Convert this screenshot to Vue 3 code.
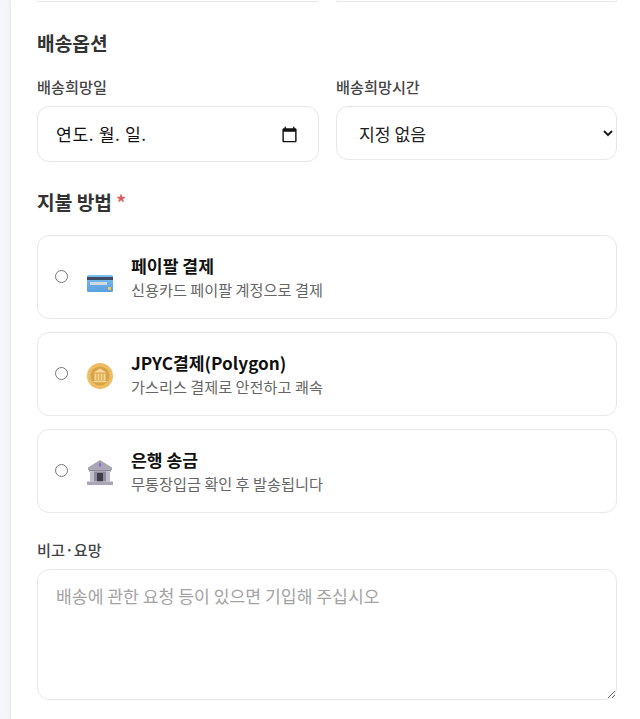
<script setup>
const methods = [
  { id: 'card', title: '페이팔 결제', desc: '신용카드 페이팔 계정으로 결제' },
  { id: 'coin', title: 'JPYC결제(Polygon)', desc: '가스리스 결제로 안전하고 쾌속' },
  { id: 'bank', title: '은행 송금', desc: '무통장입금 확인 후 발송됩니다' },
]
</script>

<template>
  <div class="page">
    <main class="card">
      <div class="stub-row">
        <div class="stub"></div>
        <div class="stub"></div>
      </div>

      <h2 class="heading first">배송옵션</h2>
      <div class="grid">
        <div>
          <label class="label">배송희망일</label>
          <div class="field date">
            <span class="date-text">연도. 월. 일.</span>
            <svg class="cal" viewBox="0 0 24 24" width="17" height="17">
              <path d="M20 3h-1V1h-2v2H7V1H5v2H4c-1.1 0-2 .9-2 2v16c0 1.1.9 2 2 2h16c1.1 0 2-.9 2-2V5c0-1.1-.9-2-2-2zm0 18H4V8h16v13z" fill="#111" />
            </svg>
          </div>
        </div>
        <div>
          <label class="label">배송희망시간</label>
          <select class="field select">
            <option>지정 없음</option>
          </select>
        </div>
      </div>

      <h2 class="heading second">지불 방법 <span class="req">*</span></h2>
      <div class="methods">
        <label v-for="m in methods" :key="m.id" class="method">
          <input class="radio" type="radio" name="pay" />
          <span class="icon">
            <svg v-if="m.id === 'card'" viewBox="0 0 26 26" width="26" height="26">
              <defs>
                <linearGradient id="cardBlue" x1="0" y1="0" x2="0" y2="1">
                  <stop offset="0" stop-color="#7cc0f0" />
                  <stop offset="1" stop-color="#5a9fe0" />
                </linearGradient>
              </defs>
              <rect x="0" y="9" width="26" height="17" rx="1.5" fill="url(#cardBlue)" />
              <rect x="0" y="11" width="26" height="3" fill="#3d4a63" />
              <rect x="3" y="16" width="17" height="3" fill="#d0d8e2" />
              <rect x="21" y="21" width="3" height="3" fill="#f0c94a" />
            </svg>
            <svg v-else-if="m.id === 'coin'" viewBox="0 0 26 26" width="26" height="26">
              <circle cx="13" cy="13" r="13" fill="#ecbd62" />
              <circle cx="13" cy="13" r="9.5" fill="#d9a146" />
              <path d="M13 5.5 L19.5 9.5 H6.5 Z" fill="#f5d896" />
              <path d="M7.5 10.5h2v6.5h-2zM10.6 10.5h1.8v6.5h-1.8zM13.6 10.5h1.8v6.5h-1.8zM16.5 10.5h2v6.5h-2z" fill="#f5d896" />
              <rect x="6.5" y="17.5" width="13" height="1.8" fill="#f5d896" />
            </svg>
            <svg v-else viewBox="0 0 26 26" width="26" height="26">
              <path d="M13 0 L25 7.5 V10 H1 V7.5 Z" fill="#aaa6b6" />
              <path d="M13 2 l1.5 2.8 -1.5 2.8 -1.5-2.8z" fill="#8a6fc6" />
              <rect x="2" y="10" width="22" height="1.5" fill="#8f8b9c" />
              <rect x="3" y="11.5" width="4" height="10" fill="#c2bfcb" />
              <rect x="19" y="11.5" width="4" height="10" fill="#c2bfcb" />
              <rect x="7" y="11.5" width="12" height="10" fill="#8f8b9c" />
              <rect x="10" y="13" width="6" height="8.5" fill="#3f3d48" />
              <rect x="0" y="21.5" width="26" height="3.5" fill="#aaa6b6" />
            </svg>
          </span>
          <span class="text">
            <span class="title">{{ m.title }}</span>
            <span class="desc">{{ m.desc }}</span>
          </span>
        </label>
      </div>

      <label class="label note-label">비고·요망</label>
      <textarea class="note" placeholder="배송에 관한 요청 등이 있으면 기입해 주십시오"></textarea>
    </main>
  </div>
</template>

<style>
html, body { margin: 0; background: #f5f6fa; }
</style>

<style scoped>
.page {
  height: 719px;
  overflow: hidden;
  padding-left: 11px;
  font-family: "Noto Sans CJK KR", "Noto Sans", sans-serif;
}
.card {
  box-sizing: border-box;
  width: 629px;
  height: 719px;
  padding: 0 23px 0 26px;
  background: #fff;
  box-shadow: -1px 0 3px rgba(0, 0, 0, 0.08);
}
.stub-row { display: grid; grid-template-columns: 282px 281px; gap: 17px; }
.stub {
  box-sizing: border-box;
  height: 2px;
  border: 1px solid #e5e7eb;
  border-top: 0;
  border-radius: 0 0 8px 8px;
}
.heading {
  margin: 0;
  font-size: 19.2px;
  font-weight: 700;
  line-height: 27px;
  color: #333;
}
.first { padding-top: 28px; }
.second { margin-top: 27px; }
.req { color: #e05a5a; }
.grid {
  display: grid;
  grid-template-columns: 282px 281px;
  gap: 17px;
  margin-top: 18px;
  align-items: start;
}
.label {
  display: block;
  font-size: 15.2px;
  font-weight: 500;
  line-height: 23px;
  color: #444;
  margin-bottom: 8px;
}
.field {
  display: block;
  box-sizing: border-box;
  width: 100%;
  border: 1px solid #e5e7eb;
  border-radius: 12px;
  background: #fff;
  font-family: inherit;
  font-size: 17.2px;
  color: #222;
  padding: 0 18px;
  outline: none;
}
.date {
  height: 56px;
  display: flex;
  align-items: center;
  justify-content: space-between;
  padding-right: 20px;
}
.date-text { color: #111; letter-spacing: 0.6px; margin-top: -2px; }
.cal { flex: none; }
.select { height: 54px; padding-right: 0; }
.methods {
  display: flex;
  flex-direction: column;
  gap: 13px;
  margin-top: 19px;
}
.method {
  box-sizing: border-box;
  height: 84px;
  display: flex;
  align-items: center;
  border: 1px solid #e5e7eb;
  border-radius: 12px;
  padding: 0 17px;
}
.radio {
  width: 13px;
  height: 13px;
  margin: 0 0 2px 0;
  flex: none;
}
.icon {
  display: flex;
  margin-left: 19px;
  margin-top: 4px;
  flex: none;
}
.text {
  display: flex;
  flex-direction: column;
  margin-left: 18px;
}
.title {
  font-size: 17.2px;
  font-weight: 600;
  line-height: 25px;
  color: #111;
}
.desc {
  font-size: 15.2px;
  line-height: 23px;
  color: #666;
}
.note-label { margin-top: 25px; }
.note {
  display: block;
  box-sizing: border-box;
  width: 580px;
  height: 131px;
  border: 1px solid #e5e7eb;
  border-radius: 12px;
  padding: 13px 18px;
  font-family: inherit;
  font-size: 17.2px;
  line-height: 25px;
  outline: none;
  resize: vertical;
}
.note::placeholder { color: #a3a3a3; }
</style>
